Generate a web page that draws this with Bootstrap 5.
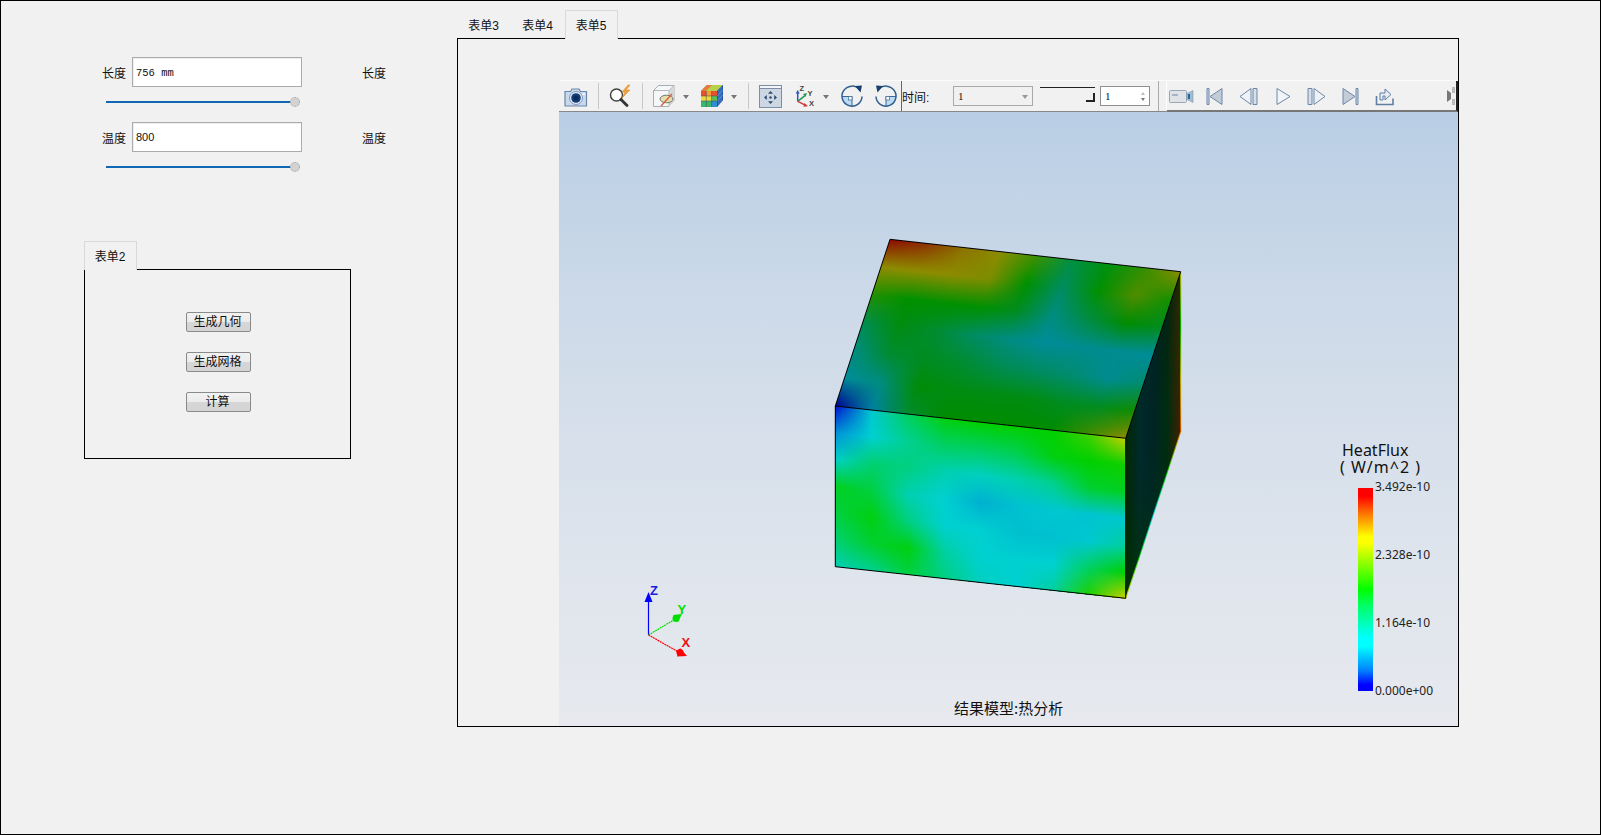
<!DOCTYPE html>
<html lang="zh">
<head>
  <meta charset="UTF-8">
  <title>热分析</title>
  <link href="https://cdn.jsdelivr.net/npm/bootstrap@5.3.3/dist/css/bootstrap.min.css" rel="stylesheet">
  <style>
    html, body { margin: 0; background: #f1f1f1; }
    body { font: 12px "Liberation Sans", "Noto Sans CJK SC", sans-serif; color: #111; overflow: hidden; }
    .app-frame { width: 1601px; height: 835px; background: #f1f1f1; box-shadow: inset 0 0 0 1px #000; }

    .left-side { width: 457px; padding-top: 57px; }
    .field-row { height: 30px; padding-left: 102px; }
    .field-row + .slider-row + .field-row { margin-top: 12px; }
    .field-label { width: 24px; white-space: nowrap; font-size: 12px; }
    .field-input { width: 170px; height: 30px; margin: 0 60px 0 6px; padding: 0 3px; border: 1px solid #ababab; border-radius: 0; font-size: 11px; color: #111; background: #fff; box-shadow: inset 1px 1px 0 #eee; }
    .field-input.mono { font: 10.5px "Liberation Mono", monospace; padding-top: 1px; }
    .slider-row { margin: 7px 0 0 106px; width: 194px; height: 16px; }
    .value-slider { display: block; width: 194px; height: 16px; padding: 0; }
    .value-slider::-webkit-slider-runnable-track { height: 2px; background: #0f67b5; border-radius: 0; }
    .value-slider::-webkit-slider-thumb { -webkit-appearance: none; width: 10px; height: 10px; margin-top: -4px; background: #d2d2d2; border: 1px dotted #a8a8a8; border-radius: 50%; box-shadow: none; }

    .form-tabs { border: 0; margin-bottom: -1px; position: relative; z-index: 1; flex-wrap: nowrap; }
    .form-tabs .nav-link { width: 54px; height: 29px; padding: 1px 1px 0 0; border: 1px solid transparent; border-bottom: 0; border-radius: 0; margin: 0; color: #111; font-size: 12px; line-height: 28px; text-align: center; background: none; }
    .form-tabs .nav-link.active { background: #f1f1f1; border-color: #d9d9d9; color: #111; }
    .form-tabs .tab-small { width: 53px; }

    .tab-two { margin: 66px 0 0 84px; width: 267px; }
    .tab-two-body { height: 190px; padding: 42px 0 0 2px; border: 1px solid #000; gap: 20px; }
    .cmd-btn { width: 65px; height: 20px; padding: 0 2px 0 0; border: 1px solid #8a8a8a; border-radius: 2px; font-size: 12px; line-height: 17px; color: #111; background: linear-gradient(#f1f1f1 0, #ececec 50%, #d6d6d6 52%, #d4d4d4 100%); }

    .right-side { padding-top: 10px; width: 1002px; }
    .main-panel { height: 689px; padding: 41px 0 0 101px; border: 1px solid #000; }
    .view-box { width: 899px; }

    .tool-strip { height: 32px; background: #f1f1f1; border-top: 1px solid #fbfbfb; border-bottom: 1px solid #888; }
    .tool-btn { width: 34px; height: 26px; }
    .tool-btn.narrow { width: 30px; margin-left: 2px; }
    .tool-arrow { width: 10px; height: 26px; }
    .tool-arrow::after { content: ""; border: 3.5px solid transparent; border-top: 4px solid #777; margin-top: 4px; }
    .tool-sep { width: 1px; height: 26px; background: #c8c8c8; }
    .sep-a { margin: 0 4px 0 5px; }
    .sep-b { margin: 0 4px 0 9px; }
    .sep-c { margin: 0 0 0 8px; height: 30px; background: #aaa; }
    .tool-edge { width: 1px; height: 30px; background: #666; }
    .time-label { width: 51px; font-size: 12px; }
    .time-combo { width: 80px; height: 20px; padding: 0 4px; border: 1px solid #a8a8a8; font: 11px "Liberation Serif", serif; line-height: 18px; }
    .time-combo::after { content: ""; border: 3.5px solid transparent; border-top: 4px solid #999; margin-top: 4px; }
    .time-track { width: 55px; height: 15px; margin: 0 5px 0 7px; border-top: 1px solid #222; position: relative; top: -2px; }
    .time-track::after { content: ""; position: absolute; right: 0; bottom: 0; width: 9px; height: 9px; border-right: 2px solid #222; border-bottom: 2px solid #222; }
    .time-spin { width: 50px; height: 20px; padding: 0 4px; border: 1px solid #8f8f8f; background: #fff; font: 11px "Liberation Serif", serif; line-height: 18px; }
    .spin-arrows { gap: 3px; }
    .spin-arrows i { display: block; border: 2.5px solid transparent; }
    .spin-arrows i:first-child { border-bottom: 3px solid #bbb; border-top: 0; }
    .spin-arrows i:last-child { border-top: 3px solid #777; border-bottom: 0; }
    .play-strip { flex: 1; align-self: stretch; margin: 0 0 -1px 7px; border-left: 1px solid #fff; border-right: 2px solid #222; border-bottom: 2px solid #777; padding-left: 2px; }
    .play-btn { height: 26px; }
    .gap-s { margin-left: 12px; }
    .gap-m { margin-left: 16px; }
    .gap-l { margin-left: 18px; }
    .strip-grip { margin-left: auto; margin-right: 1px; }

    .scene { height: 614px; position: relative; background: linear-gradient(#b9cee5 0, #cfdbe9 35%, #dfe5ed 75%, #e7e9ee 100%); overflow: hidden; }
    .cube-canvas { position: absolute; left: 271px; top: 123px; }
    .triad { position: absolute; left: 70px; top: 470px; }
    .legend-title { position: absolute; left: 781px; top: 330px; font: 16px/17px "Noto Sans", "Noto Sans CJK SC", sans-serif; color: #111; white-space: nowrap; }
    .legend-title span { display: block; }
    .legend-title .title-name { padding-left: 2px; }
    .legend-title .title-unit { letter-spacing: 1px; }
    .legend-bar { position: absolute; left: 799px; top: 376px; width: 15px; height: 203px; background: linear-gradient(#f00 0, #f00 4%, #fd7a00 13%, #ff0 24%, #ff0 27%, #0f0 50%, #0f6 58%, #0ff 74%, #0ff 78%, #0080ff 90%, #00f 97%, #00f 100%); }
    .legend-tick { position: absolute; left: 816px; font: 12px/14px "Noto Sans", sans-serif; color: #222; white-space: nowrap; }
    .tick-a { top: 368px; } .tick-b { top: 436px; } .tick-c { top: 504px; } .tick-d { top: 572px; }
    .model-caption { position: absolute; left: 395px; top: 586px; font: 15px/20px "Noto Sans CJK SC", sans-serif; color: #111; white-space: nowrap; }
  </style>
</head>
<body>
  <div class="app-frame d-flex">

    <div class="left-side">
      <div class="field-row d-flex align-items-center">
        <span class="field-label">长度</span>
        <input class="field-input mono" type="text" value="756 mm">
        <span class="field-label">长度</span>
      </div>
      <div class="slider-row"><input class="form-range value-slider" type="range" value="100"></div>
      <div class="field-row d-flex align-items-center">
        <span class="field-label">温度</span>
        <input class="field-input" type="text" value="800">
        <span class="field-label">温度</span>
      </div>
      <div class="slider-row"><input class="form-range value-slider" type="range" value="100"></div>

      <div class="tab-two">
        <ul class="nav nav-tabs form-tabs">
          <li class="nav-item"><a class="nav-link tab-small active" href="#">表单2</a></li>
        </ul>
        <div class="tab-two-body d-flex flex-column align-items-center">
          <button class="btn cmd-btn" type="button">生成几何</button>
          <button class="btn cmd-btn" type="button">生成网格</button>
          <button class="btn cmd-btn" type="button">计算</button>
        </div>
      </div>
    </div>

    <div class="right-side">
      <ul class="nav nav-tabs form-tabs">
        <li class="nav-item"><a class="nav-link" href="#">表单3</a></li>
        <li class="nav-item"><a class="nav-link" href="#">表单4</a></li>
        <li class="nav-item"><a class="nav-link tab-small active" href="#">表单5</a></li>
      </ul>
      <div class="main-panel">
        <div class="view-box">
          <div class="tool-strip d-flex align-items-center">
            <span class="tool-btn d-flex align-items-center justify-content-center">
              <svg width="24" height="24" viewBox="0 0 24 24"><path d="M1 7.500h5.500l1.500-2.500h7l1.500 2.500h6v14.500h-21.500z" fill="#c9d8ea" stroke="#6b87ab" stroke-width="1.200"/><circle cx="12" cy="14" r="6.500" fill="#e6eef6" stroke="#7f9ab9"/><circle cx="12" cy="14" r="4.800" fill="#163c78"/><circle cx="12" cy="14" r="2.500" fill="#0b2a5c"/><rect x="18.500" y="9.500" width="2.500" height="1.500" fill="#fff"/></svg>
            </span>
            <span class="tool-sep sep-a"></span>
            <span class="tool-btn d-flex align-items-center justify-content-center">
              <svg width="24" height="24" viewBox="0 0 24 24"><circle cx="8.500" cy="11" r="6" fill="#fff" stroke="#444" stroke-width="1.500"/><path d="M13 15.500l6 6" stroke="#333" stroke-width="2.800" stroke-linecap="round"/><path d="M20 1l-6 7h3l-3 6 8-8h-4l4-5z" fill="#f2a13a" stroke="#d98520" stroke-width=".5"/></svg>
            </span>
            <span class="tool-sep sep-a"></span>
            <span class="tool-btn d-flex align-items-center justify-content-center">
              <svg width="24" height="24" viewBox="0 0 24 24"><path d="M1.500 6.500l5-5h15.500v15l-5.500 6h-15z" fill="#f6f7f8" stroke="#a9adb2"/><path d="M17 6.500l5-5v15l-5 6z" fill="#d6d9dc"/><path d="M1.500 6.500h15.500v16M17 6.500l5-5" fill="none" stroke="#b4b8bd"/><ellipse cx="14.500" cy="15" rx="6.500" ry="3.800" fill="#e6dcb0" stroke="#77776a"/><path d="M9 22l11-12" stroke="#d2603a" stroke-width="1.300"/></svg>
            </span>
            <span class="tool-arrow d-flex align-items-center justify-content-center"></span>
            <span class="tool-btn ms-1 d-flex align-items-center justify-content-center">
              <svg width="24" height="24" viewBox="0 0 24 24"><path d="M7 1h16v15l-6 7h-16v-16z" fill="#2a6cc0"/><path d="M7 1h16l-6 6h-16z" fill="#b9d04a"/><path d="M7 1h5l-6 6h-5z" fill="#e7793a"/><rect x="1" y="7" width="16" height="5" fill="#e8502e"/><rect x="6.300" y="7" width="5.300" height="5" fill="#efa02e"/><rect x="1" y="12" width="16" height="5" fill="#eadb38"/><rect x="11.600" y="12" width="5.400" height="5" fill="#5cc05a"/><rect x="1" y="17" width="16" height="6" fill="#39b86a"/><rect x="11.600" y="17" width="5.400" height="6" fill="#2f8fd0"/><path d="M6.300 7v16M11.600 7v16M1 12h16M1 17h16" stroke="#446" stroke-width=".5"/><path d="M17 7l6-6v15l-6 7z" fill="#2059ad"/><path d="M17 12l6-6M17 17l6-6M19 5v16M21 3v16" stroke="#7db0e0" stroke-width=".5"/></svg>
            </span>
            <span class="tool-arrow d-flex align-items-center justify-content-center"></span>
            <span class="tool-sep sep-b"></span>
            <span class="tool-btn d-flex align-items-center justify-content-center">
              <svg width="23" height="23" viewBox="0 0 23 23"><rect x=".5" y=".5" width="22" height="22" fill="#cdd7e3" stroke="#7c8ea6"/><path d="M.5 3.500h22" stroke="#7c8ea6"/><rect x="1" y="1" width="21" height="2" fill="#f3f5f8"/><path d="M11.500 6l2.500 2.800h-5zM11.500 19l2.500-2.800h-5zM5 12.500l2.800-2.500v5zM18 12.500l-2.800-2.500v5z" fill="#2f4a6c"/><circle cx="11.500" cy="12.500" r="1.200" fill="#2f4a6c"/></svg>
            </span>
            <span class="tool-btn d-flex align-items-center justify-content-center">
              <svg width="24" height="24" viewBox="0 0 24 24"><path d="M5.700 17.300v-9" stroke="#2b57b5" stroke-width="1.500"/><path d="M3.700 9.500l2-3.500 2 3.500z" fill="#2b57b5"/><path d="M5.700 17.300l7-5.500" stroke="#1f9a4d" stroke-width="1.500"/><path d="M11 10l4-1-1.500 4z" fill="#1f9a4d"/><path d="M5.700 17.300l8 4" stroke="#d13a3a" stroke-width="1.500"/><path d="M12.500 19l3.500 3.300-4.500.5z" fill="#d13a3a"/><text x="7.500" y="6.500" font-family="Liberation Sans" font-size="7.500" font-weight="700" fill="#444">Z</text><text x="15.500" y="12" font-family="Liberation Sans" font-size="7.500" font-weight="700" fill="#444">Y</text><text x="17" y="22" font-family="Liberation Sans" font-size="7.500" font-weight="700" fill="#444">X</text></svg>
            </span>
            <span class="tool-arrow d-flex align-items-center justify-content-center"></span>
            <span class="tool-btn ms-1 d-flex align-items-center justify-content-center">
              <svg width="24" height="24" viewBox="0 0 24 24"><path d="M2 12.500h10v10a10 10 0 0 1-10-10z" fill="#bcdaf0"/><path d="M2 12.500h10v10" fill="none" stroke="#3b6a98"/><rect x="8.500" y="12.500" width="3.500" height="3.500" fill="#fff" stroke="#3b6a98" stroke-width=".7"/><path d="M19.500 5.500a10 10 0 1 0 2.500 7" fill="none" stroke="#2f5f8f" stroke-width="1.500"/><path d="M15 2l7-.5-1.500 7z" fill="#17406e"/></svg>
            </span>
            <span class="tool-btn narrow d-flex align-items-center justify-content-center">
              <svg width="24" height="24" viewBox="0 0 24 24"><path d="M22 12.500h-10v10a10 10 0 0 0 10-10z" fill="#bcdaf0"/><path d="M22 12.500h-10v10" fill="none" stroke="#3b6a98"/><rect x="12" y="12.500" width="3.500" height="3.500" fill="#fff" stroke="#3b6a98" stroke-width=".7"/><path d="M4.500 5.500a10 10 0 1 1-2.500 7" fill="none" stroke="#2f5f8f" stroke-width="1.500"/><path d="M9 2l-7-.5 1.500 7z" fill="#17406e"/></svg>
            </span>
            <span class="tool-edge"></span>
            <span class="time-label">时间:</span>
            <span class="time-combo d-flex justify-content-between align-items-center">1</span>
            <span class="time-track"></span>
            <span class="time-spin d-flex justify-content-between align-items-center">1<span class="spin-arrows d-flex flex-column"><i></i><i></i></span></span>
            <span class="tool-sep sep-c"></span>
            <div class="play-strip d-flex align-items-center">
              <svg class="play-btn" width="25" height="26" viewBox="0 0 25 26"><rect x=".5" y="7.500" width="17" height="12" rx="1" fill="#dfe3e8" stroke="#98a6b6"/><rect x="3" y="11" width="6" height="2" fill="#a8b4c2"/><path d="M18 10.500l6-3v12l-6-3z" fill="#a4bccf" stroke="#7d97b4" stroke-width=".6"/><path d="M19 11v5h2v-5z" fill="#1e6a94"/></svg>
              <svg class="play-btn gap-s" width="17" height="26" viewBox="0 0 17 26"><path d="M1 5.500v16h2v-16z" fill="#cdd8e4" stroke="#6c87a8"/><path d="M16 5.500v16l-12-8z" fill="#c3cdd8" stroke="#6c87a8"/></svg>
              <svg class="play-btn gap-m" width="19" height="26" viewBox="0 0 19 26"><path d="M12 5.500v16l-11-8z" fill="#eef2f6" stroke="#6c87a8"/><path d="M14 5.500v16h4v-16z" fill="#d6dfe9" stroke="#6c87a8"/></svg>
              <svg class="play-btn gap-l" width="15" height="26" viewBox="0 0 15 26"><path d="M1 5.500v16l13-8z" fill="#f2f5f8" stroke="#6c87a8"/></svg>
              <svg class="play-btn gap-m" width="19" height="26" viewBox="0 0 19 26"><path d="M1 5.500v16h4v-16z" fill="#d6dfe9" stroke="#6c87a8"/><path d="M7 5.500v16l11-8z" fill="#eef2f6" stroke="#6c87a8"/></svg>
              <svg class="play-btn gap-m" width="17" height="26" viewBox="0 0 17 26"><path d="M1 5.500v16l12-8z" fill="#c3cdd8" stroke="#6c87a8"/><path d="M14 5.500v16h2v-16z" fill="#cdd8e4" stroke="#6c87a8"/></svg>
              <svg class="play-btn gap-m" width="20" height="26" viewBox="0 0 20 26"><path d="M1.500 13v8.500h16.500v-6" fill="none" stroke="#5f7fa5" stroke-width="1.600"/><path d="M5 17v-7h5v-4l6 5.500-6 5.500v-4h-2v4z" fill="#e6ecf2" stroke="#5f7fa5"/></svg>
              <svg class="strip-grip" width="8" height="20" viewBox="0 0 8 20"><path d="M0 4l4 3v6l-4 3z" fill="#777"/><path d="M5 1h3v6h-3zM5 13h3v6h-3z" fill="#bbb"/></svg>
            </div>
          </div>

          <div class="scene">
            <canvas class="cube-canvas" id="cube" width="360" height="370"></canvas>
            <svg class="triad" width="70" height="90" viewBox="0 0 70 90">
              <path d="M19.500 53v-36" stroke="#0000ff" stroke-width="1.200"/>
              <path d="M15.500 20l4-10 4 10z" fill="#0000ff"/>
              <path d="M19.500 53l26-15.500" stroke="#00e000" stroke-width="1.200" stroke-dasharray="2 .6"/>
              <circle cx="47" cy="36.500" r="3.500" fill="#00e000"/><path d="M44 33l9-1-4 8z" fill="#00e000"/>
              <path d="M19.500 53l30 17" stroke="#ff0000" stroke-width="1.200" stroke-dasharray="2 .6"/>
              <circle cx="51" cy="70.500" r="3.500" fill="#ff0000"/><path d="M51 66l7 8-10 .5z" fill="#ff0000"/>
              <text x="21" y="12.500" font-family="Liberation Sans" font-size="13" font-weight="700" fill="#1a1ae0">Z</text>
              <text x="48.500" y="32" font-family="Liberation Sans" font-size="13" font-weight="700" fill="#00e000">Y</text>
              <text x="52.500" y="65" font-family="Liberation Sans" font-size="13" font-weight="700" fill="#f01010">X</text>
            </svg>
            <div class="legend-title"><span class="title-name">HeatFlux</span><span class="title-unit">( W/m^2 )</span></div>
            <div class="legend-bar"></div>
            <span class="legend-tick tick-a">3.492e-10</span>
            <span class="legend-tick tick-b">2.328e-10</span>
            <span class="legend-tick tick-c">1.164e-10</span>
            <span class="legend-tick tick-d">0.000e+00</span>
            <div class="model-caption">结果模型:热分析</div>
          </div>
        </div>
      </div>
    </div>
  </div>

  <script src="https://cdn.jsdelivr.net/npm/bootstrap@5.3.3/dist/js/bootstrap.bundle.min.js"></script>
  <script>
    // colour samples of the three visible cube faces, rows run top to bottom
    const topFace = [
      ["8c0800","8c3000","8c7000","8c8c00","409000","009040","009010","309000","8c8c00"],
      ["8c8c00","8c8c00","8c8c00","7c8c00","009000","008c60","009000","508c00","109000"],
      ["209000","009000","009000","009000","008c20","008c80","008c40","008c00","008c20"],
      ["008c50","008c10","008c30","008c60","008c80","008c98","008c90","008c90","008c98"],
      ["008c80","008c30","008c20","008c30","008c50","008c60","008c70","008c90","008c70"],
      ["008c98","008c80","008c08","008c10","008c10","008c10","008c20","008c20","108c00"],
      ["000090","0080a0","008c30","008c00","008c00","008c00","008c00","408c00","8c8c00"]
    ];
    const frontFace = [
      ["0010d0","00c8d0","00d060","00d010","00d000","00d000","00d000","40d000","c8d000"],
      ["0090d8","00d0d0","00d090","00d060","00d060","00d050","00d010","00d000","10d000"],
      ["00d0c8","00d070","00d080","00d0b0","00d0c0","00d0b0","00d090","00d030","00d020"],
      ["00d020","00d040","00d0b0","00d0d0","00b0d0","00c0d0","00c8d0","00c4d0","00c8d0"],
      ["00d040","00d010","00d080","00d0d0","00d0d0","00c0d0","00c0d0","00c8d0","00d0a0"],
      ["00d070","00d030","00d010","00d0a0","00d0d0","00d0d0","00d0d0","00d060","00d000"],
      ["00d0b0","00d090","00d040","00d080","00d0c0","00d0d0","00d0a0","20d000","d0d000"]
    ];
    const sideFace = [
      ["002800","002a2a","002424","002410","2a2a00"],
      ["002800","002a2a","002424","002c10","382400"],
      ["003000","003018","002a20","002c10","402000"]
    ];

    const ox = 830, oy = 235;
    const pt = (x, y) => [x - ox, y - oy];
    const A = pt(890, 239.3), B = pt(1180.7, 271.7), C = pt(835.3, 406), D = pt(1125.7, 438.3);
    const E = pt(835.3, 566.7), F = pt(1125.7, 598.3), G = pt(1180.7, 431.7);

    const rgb = h => [0, 2, 4].map(i => parseInt(h.substr(i, 2), 16));
    const toRgb = grid => grid.map(r => r.map(rgb));

    function paintFace(img, grid, org, pu, pv) {
      const g = toRgb(grid);
      const ux = pu[0] - org[0], uy = pu[1] - org[1], vx = pv[0] - org[0], vy = pv[1] - org[1];
      const det = ux * vy - uy * vx;
      for (let y = 0; y < img.height; y++) {
        for (let x = 0; x < img.width; x++) {
          const dx = x + .5 - org[0], dy = y + .5 - org[1];
          const u = (dx * vy - dy * vx) / det, v = (ux * dy - uy * dx) / det;
          if (u < 0 || u > 1 || v < 0 || v > 1) continue;
          const cu = u * (g[0].length - 1), cv = v * (g.length - 1);
          const i = Math.min(Math.floor(cu), g[0].length - 2), j = Math.min(Math.floor(cv), g.length - 2);
          const fu = cu - i, fv = cv - j;
          const k = (x + y * img.width) * 4;
          for (let c = 0; c < 3; c++) {
            img.data[k + c] = (g[j][i][c] * (1 - fu) + g[j][i + 1][c] * fu) * (1 - fv) + (g[j + 1][i][c] * (1 - fu) + g[j + 1][i + 1][c] * fu) * fv;
          }
          img.data[k + 3] = 255;
        }
      }
    }

    const ctx = document.getElementById("cube").getContext("2d");
    const img = ctx.createImageData(360, 370);
    paintFace(img, topFace, A, B, C);
    paintFace(img, frontFace, C, D, E);
    paintFace(img, sideFace, D, B, F);
    ctx.putImageData(img, 0, 0);

    function edge(a, b, stroke) {
      ctx.beginPath();
      ctx.moveTo(a[0], a[1]);
      ctx.lineTo(b[0], b[1]);
      ctx.strokeStyle = stroke;
      ctx.lineWidth = 1;
      ctx.stroke();
    }
    const bottomGlow = ctx.createLinearGradient(F[0], F[1], G[0], G[1]);
    ["#d0d000", "#00d000", "#00c8d0", "#00d000", "#e08000"].forEach((c, i) => bottomGlow.addColorStop(i / 4, c));
    const sideGlow = ctx.createLinearGradient(B[0], B[1], G[0], G[1]);
    ["#c8c800", "#00c000", "#c8c800", "#e06000"].forEach((c, i) => sideGlow.addColorStop(i / 3, c));
    edge(F, G, bottomGlow);
    edge(B, G, sideGlow);
    [[A, B], [A, C], [C, D], [D, B], [C, E], [E, F], [D, F]].forEach(p => edge(p[0], p[1], "#000"));
  </script>
</body>
</html>
